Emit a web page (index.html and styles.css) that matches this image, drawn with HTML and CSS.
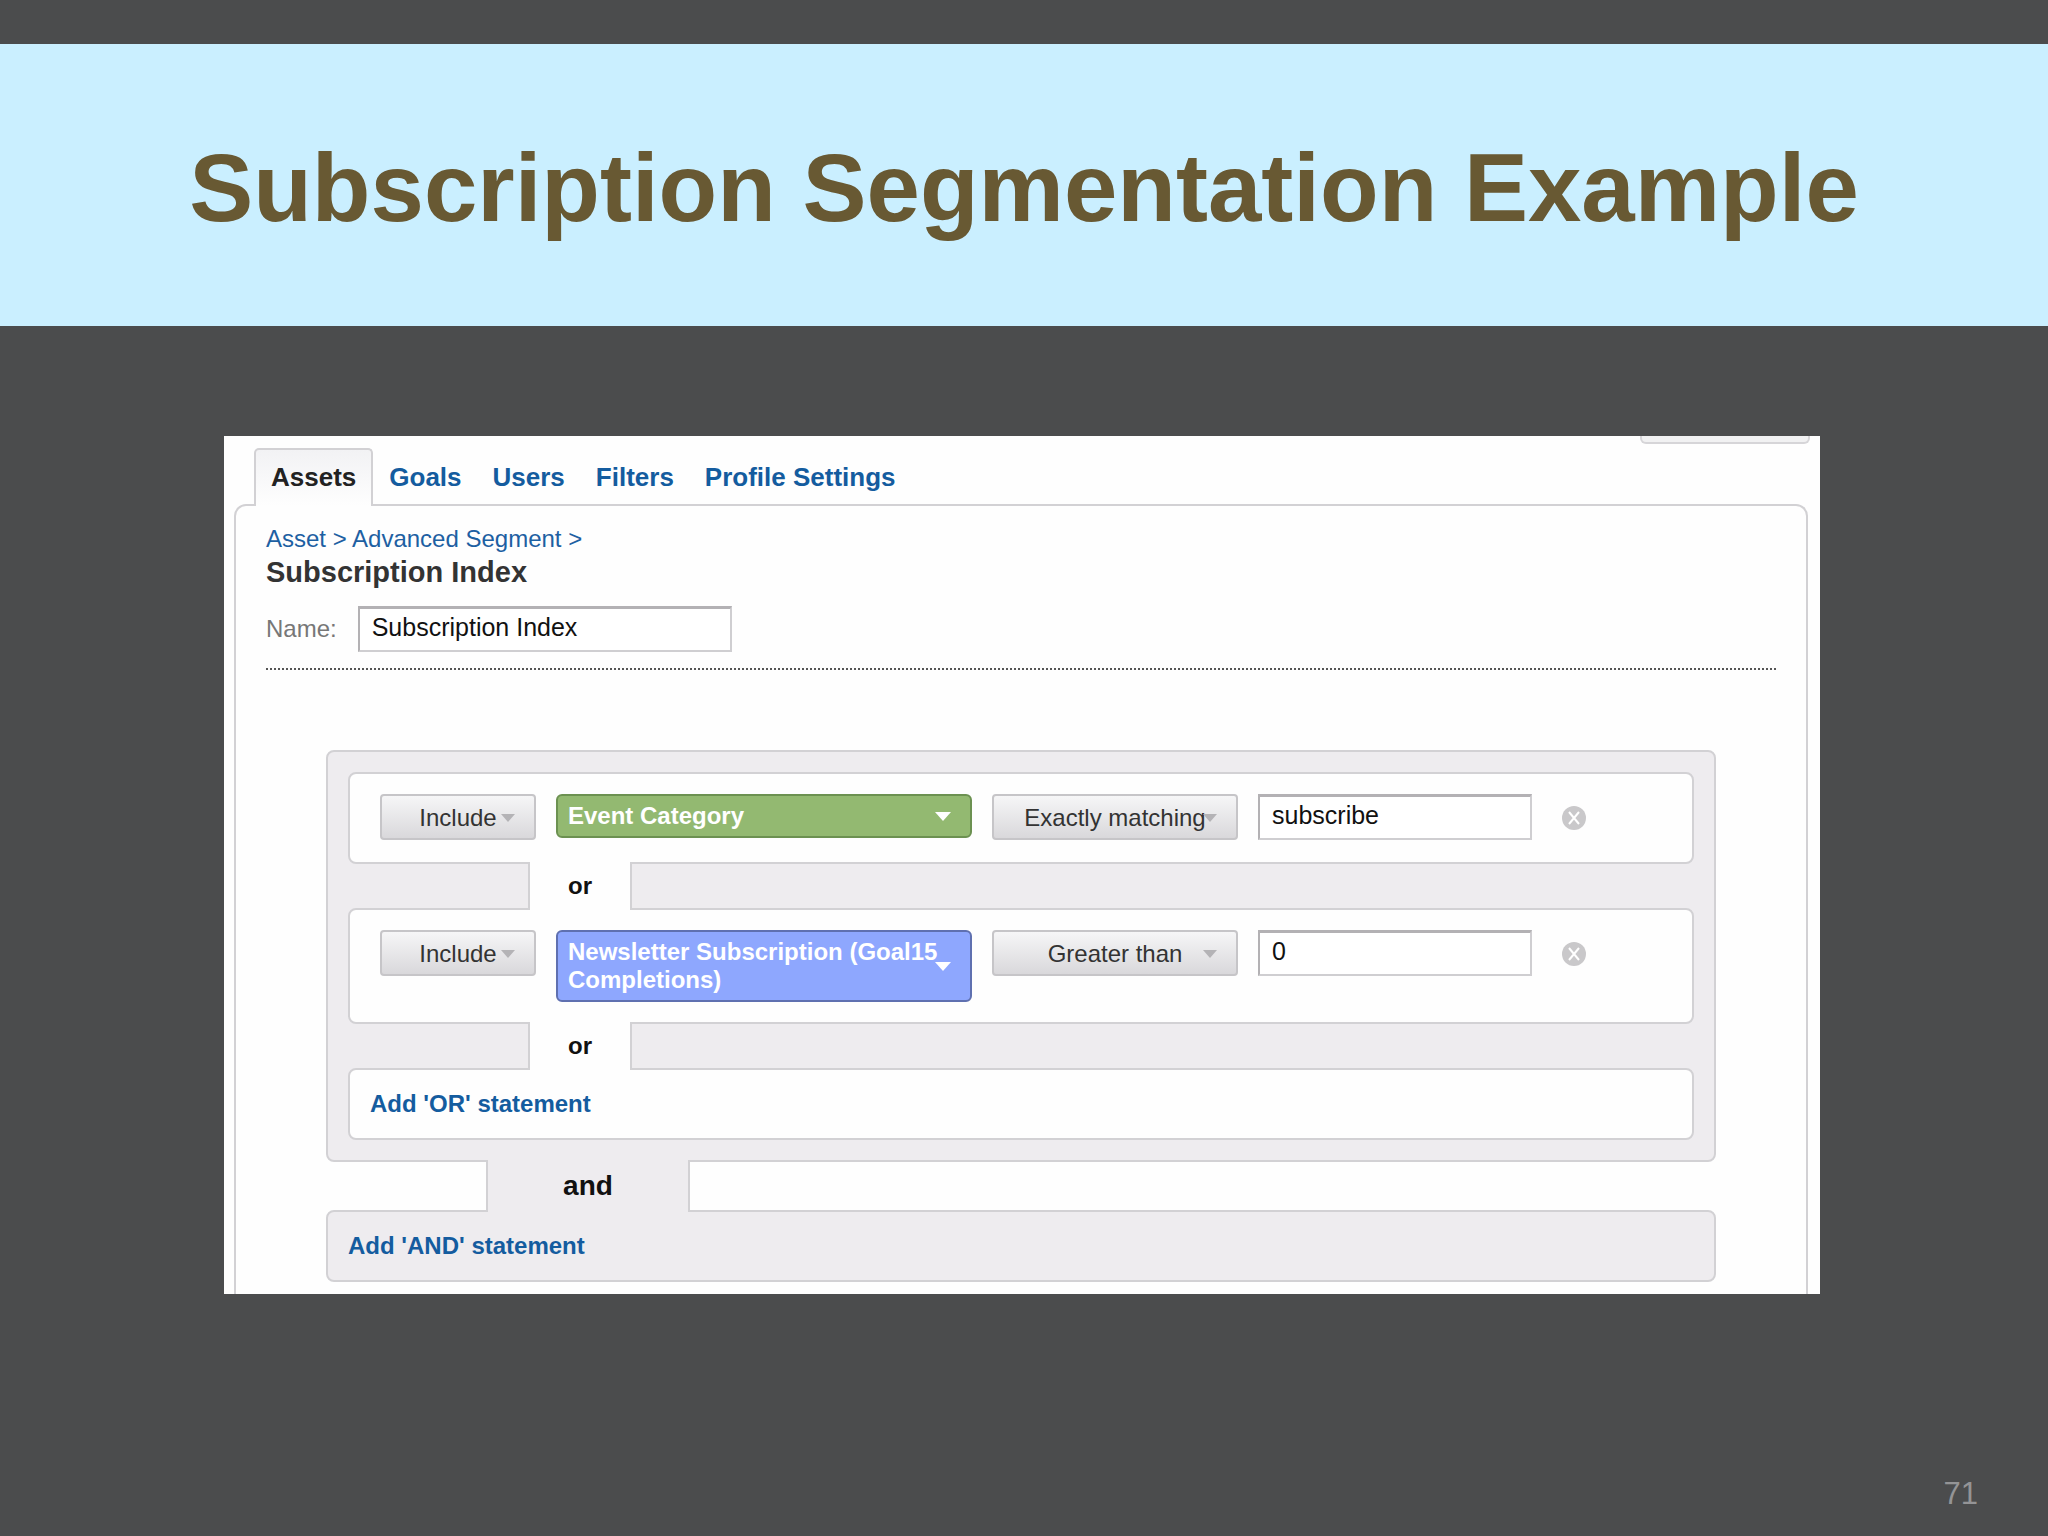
FILE: index.html
```html
<!DOCTYPE html>
<html lang="en">
<head>
    <meta charset="UTF-8">
    <meta name="viewport" content="width=device-width, initial-scale=1.0">
    <title>Subscription Segmentation Example</title>
    <link rel="stylesheet" href="styles.css">
</head>
<body>
    <header class="title-band">
        <h1>Subscription Segmentation Example</h1>
    </header>

    <main class="panel">
        <div class="toolbar">
            <div class="toolbar-edge"></div>
        </div>

        <nav class="tabs">
            <a href="#" class="tab active">Assets</a>
            <a href="#" class="tab">Goals</a>
            <a href="#" class="tab">Users</a>
            <a href="#" class="tab">Filters</a>
            <a href="#" class="tab">Profile Settings</a>
        </nav>

        <form class="content">
            <div class="breadcrumb"><a href="#">Asset</a> &gt; <a href="#">Advanced Segment</a> &gt;</div>
            <h2>Subscription Index</h2>
            <div class="name-row">
                <label for="segment-name">Name:</label>
                <input type="text" id="segment-name" class="text-box" value="Subscription Index">
            </div>

            <div class="segment">
                <div class="group">
                    <div class="condition">
                        <span class="dropdown include">
                            <select aria-label="Include or exclude">
                                <option>Include</option>
                                <option>Exclude</option>
                            </select>
                        </span>
                        <span class="dropdown metric dimension">
                            <select aria-label="Dimension">
                                <button type="button"><selectedcontent></selectedcontent></button>
                                <option>Event Category</option>
                            </select>
                        </span>
                        <span class="dropdown operator">
                            <select aria-label="Match type">
                                <option>Exactly matching</option>
                            </select>
                        </span>
                        <input type="text" class="text-box value" aria-label="Value" value="subscribe">
                        <button type="button" class="remove" aria-label="Remove condition">
                            <svg viewBox="0 0 26 26" width="26" height="26">
                                <circle cx="13" cy="13" r="12" fill="#c9c8ca"/>
                                <path d="M8 7l10 12M18 7l-10 12" stroke="#fff" stroke-width="2" fill="none"/>
                            </svg>
                        </button>
                    </div>

                    <div class="connector or"><span>or</span></div>

                    <div class="condition">
                        <span class="dropdown include">
                            <select aria-label="Include or exclude">
                                <option>Include</option>
                                <option>Exclude</option>
                            </select>
                        </span>
                        <span class="dropdown metric">
                            <select aria-label="Metric">
                                <button type="button"><selectedcontent></selectedcontent></button>
                                <option>Newsletter Subscription (Goal15 Completions)</option>
                            </select>
                        </span>
                        <span class="dropdown operator">
                            <select aria-label="Comparison">
                                <option>Greater than</option>
                            </select>
                        </span>
                        <input type="text" class="text-box value" aria-label="Value" value="0">
                        <button type="button" class="remove" aria-label="Remove condition">
                            <svg viewBox="0 0 26 26" width="26" height="26">
                                <circle cx="13" cy="13" r="12" fill="#c9c8ca"/>
                                <path d="M8 7l10 12M18 7l-10 12" stroke="#fff" stroke-width="2" fill="none"/>
                            </svg>
                        </button>
                    </div>

                    <div class="connector or"><span>or</span></div>

                    <div class="add-row add-or"><a href="#">Add 'OR' statement</a></div>
                </div>

                <div class="connector and"><span>and</span></div>

                <div class="add-row add-and"><a href="#">Add 'AND' statement</a></div>
            </div>
        </form>
    </main>

    <footer class="page-number">71</footer>
</body>
</html>
```
FILE: styles.css
```css
* {
    box-sizing: border-box;
}

body {
    display: flex;
    flex-direction: column;
    min-height: 100vh;
    margin: 0;
    padding-top: 44px;
    background-color: #4b4c4d;
    font-family: "Liberation Sans", Arial, sans-serif;
    font-size: 24px;
}

a {
    color: inherit;
    text-decoration: none;
}

.title-band {
    background-color: #caefff;
    padding: 90px 20px 84px;
    text-align: center;
}

h1 {
    margin: 0;
    font-size: 96px;
    line-height: 108px;
    color: #685933;
}

.panel {
    margin: 110px 228px 0 224px;
    background-color: #fefefe;
}

/* lower edge of the button that sits above the tabs */
.toolbar {
    display: flex;
    justify-content: flex-end;
    padding-right: 10px;
    margin-bottom: 4px;
}

.toolbar-edge {
    width: 170px;
    height: 8px;
    border: 2px solid #d6d5d8;
    border-top: none;
    border-radius: 0 0 6px 6px;
    background-color: #f1f1f2;
}

/* Tabs */
.tabs {
    display: flex;
    gap: 1px;
    padding-left: 30px;
    font-size: 26px;
    font-weight: bold;
    line-height: 54px;
    color: #145c9f;
}

.tab {
    padding: 2px 15px;
    margin-bottom: -2px;
}

.tab.active {
    position: relative;
    padding-top: 0;
    border: 2px solid #d2d1d4;
    border-bottom: none;
    border-radius: 5px 5px 0 0;
    background: linear-gradient(#f2f2f4, #fefefe);
    color: #222;
}

.content {
    margin: 0 12px 0 10px;
    padding: 18px 30px 12px;
    border: 2px solid #d2d1d4;
    border-bottom: none;
    border-radius: 12px 12px 0 0;
}

.breadcrumb {
    line-height: 30px;
    color: #1d60a2;
}

h2 {
    margin: 2px 0 18px;
    font-size: 29px;
    line-height: 32px;
    color: #333;
}

.name-row {
    display: flex;
    align-items: center;
    gap: 21px;
    padding-bottom: 16px;
    border-bottom: 2px dotted #555;
    color: #777;
}

.text-box {
    width: 374px;
    height: 46px;
    padding: 0 12px 4px;
    border: 2px solid #cfced1;
    border-top: 3px solid #b3b1b4;
    border-left-color: #b3b1b4;
    background-color: #fff;
    font-family: inherit;
    font-size: 25px;
    color: #111;
}

/* Segment builder */
.segment {
    margin: 80px 60px 0;
}

.group {
    padding: 20px;
    border: 2px solid #d2d1d4;
    border-radius: 8px;
    background-color: #eeecef;
}

.condition {
    display: flex;
    align-items: flex-start;
    gap: 20px;
    min-height: 92px;
    padding: 20px 30px;
    border: 2px solid #d2d1d4;
    border-radius: 8px;
    background-color: #fefefe;
}

.dropdown {
    position: relative;
}

.dropdown::after {
    content: "";
    position: absolute;
    top: 50%;
    right: 21px;
    margin-top: -3px;
    border: 7px solid transparent;
    border-top: 8px solid #b4b3b6;
    border-bottom: none;
    pointer-events: none;
}

.dropdown select {
    display: block;
    width: 100%;
    height: 46px;
    padding: 0;
    appearance: none;
    border: 2px solid #c6c5c8;
    border-radius: 4px;
    background: linear-gradient(#f6f6f7, #d9d8db);
    font-family: inherit;
    font-size: 24px;
    text-align: center;
    text-align-last: center;
    color: #333;
}

.include {
    width: 156px;
}

.operator {
    width: 246px;
}

.metric {
    width: 416px;
}

.metric::after {
    margin-top: -4px;
    border-width: 9px 8px 0;
    border-top-color: #fff;
}

.metric select {
    appearance: base-select;
    height: auto;
    min-height: 44px;
    padding: 6px 20px 6px 10px;
    border-color: #5f70b0;
    border-radius: 6px;
    background: #8ea7fe;
    font-weight: bold;
    line-height: 28px;
    text-align: left;
    text-align-last: left;
    white-space: normal;
    color: #fff;
}

.metric select::picker-icon {
    display: none;
}

.metric button {
    padding: 0;
    border: none;
    background: none;
    font: inherit;
    text-align: left;
    color: inherit;
}

.dimension select {
    border-color: #6c9151;
    background: #93b971;
}

.value {
    width: 274px;
}

.remove {
    display: flex;
    margin: 11px 0 0 9px;
    padding: 0;
    border: none;
    background: none;
}

/* Bridges between boxes, drawn over the borders above and below */
.connector {
    position: relative;
    display: flex;
    margin: -2px 0;
    font-weight: bold;
    text-align: center;
    color: #111;
}

.connector span {
    border: 2px solid #d2d1d4;
    border-width: 0 2px;
}

.connector.or span {
    width: 104px;
    margin-left: 180px;
    line-height: 48px;
    background-color: #fefefe;
}

.connector.and span {
    width: 204px;
    margin-left: 160px;
    font-size: 28px;
    line-height: 52px;
    background-color: #eeecef;
}

.add-row {
    padding: 0 20px;
    border: 2px solid #d2d1d4;
    border-radius: 8px;
    line-height: 68px;
    font-weight: bold;
    color: #145c9f;
}

.add-or {
    background-color: #fefefe;
}

.add-and {
    background-color: #eeecef;
}

.page-number {
    margin-top: auto;
    padding: 0 70px 24px;
    font-size: 31px;
    line-height: 36px;
    text-align: right;
    color: #949496;
}
```
